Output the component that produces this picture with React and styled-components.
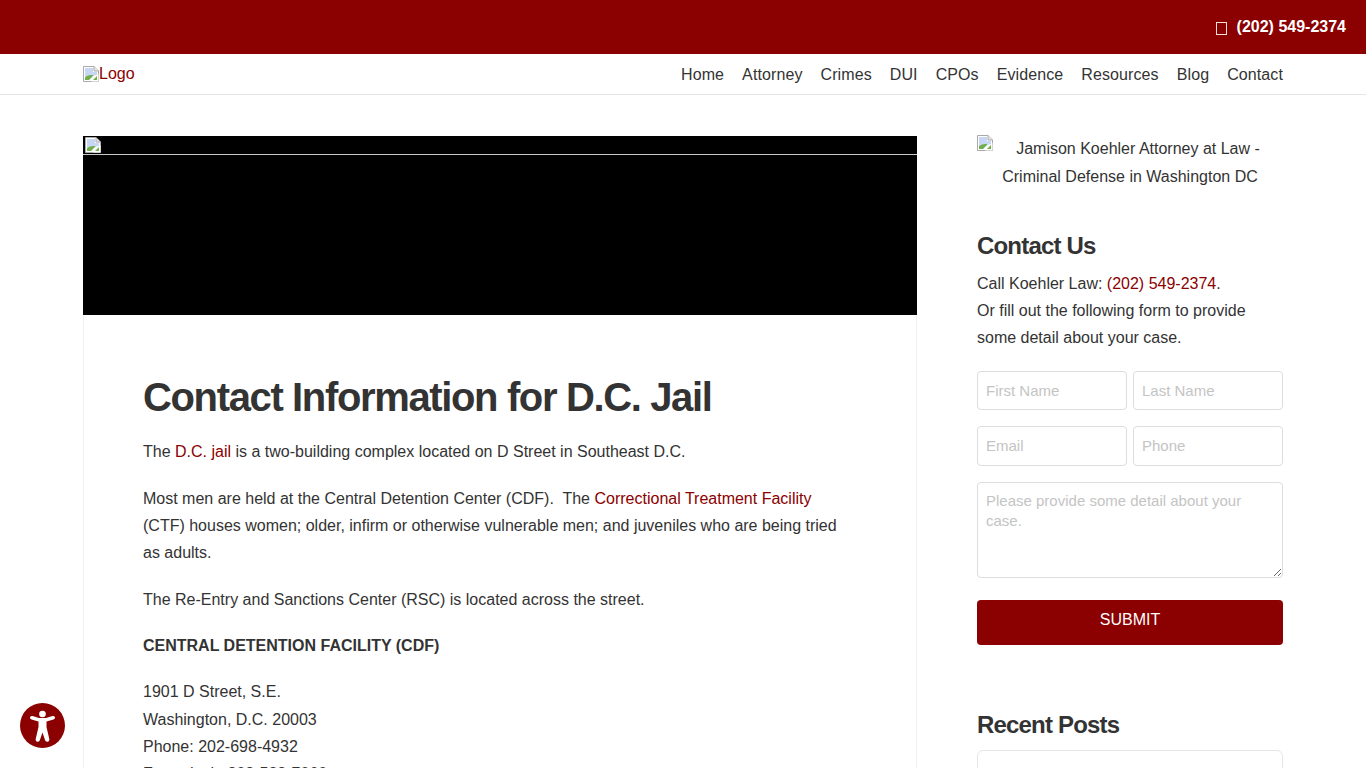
import React from 'react';
import styled, { createGlobalStyle } from 'styled-components';

const maroon = '#8b0000';

const GlobalStyle = createGlobalStyle`
  * { box-sizing: border-box; }
  html, body { margin: 0; padding: 0; background: #fff; }
  body {
    font-family: "Liberation Sans", Arial, sans-serif;
    font-size: 16px;
    line-height: 27.2px;
    color: #333;
  }
  a { color: ${maroon}; text-decoration: none; }
`;

const TopBar = styled.div`
  height: 54px;
  background: ${maroon};
  display: flex;
  justify-content: flex-end;
  align-items: center;
  padding: 0 20px 1px 0;
  color: #fff;
  font-weight: 700;
`;

const MissingGlyph = styled.span`
  width: 11px;
  height: 13px;
  border: 1px solid #f4dede;
  margin-right: 10px;
  margin-top: 3px;
`;

const NavBar = styled.header`
  height: 41px;
  border-bottom: 1px solid #e4e4e4;
  display: flex;
  justify-content: center;
`;

const NavInner = styled.div`
  width: 1200px;
  padding-top: 1px;
  display: flex;
  justify-content: space-between;
  align-items: center;
`;

const LogoLink = styled.a`
  display: flex;
  align-items: center;
  margin-top: -2px;
  svg { margin-top: 1px; }
`;

const NavLinks = styled.nav`
  display: flex;
  gap: 18px;
  letter-spacing: 0.1px;
`;

const NavLink = styled.a`
  color: #333;
`;

const Page = styled.div`
  width: 1200px;
  margin: 41px auto 0;
  display: grid;
  grid-template-columns: 834px 306px;
  column-gap: 60px;
  align-items: start;
`;

const Article = styled.main`
  border: 1px solid #f1f1f1;
  border-top: 0;
  border-radius: 0 0 6px 6px;
`;

const Hero = styled.div`
  height: 179px;
  margin: 0 -1px;
  background: #000;
  position: relative;
  padding: 1px 2px;
  svg { display: block; }
  &::after {
    content: "";
    position: absolute;
    left: 0;
    right: 0;
    top: 18px;
    height: 1px;
    background: #c8c8c8;
  }
`;

const Body = styled.div`
  padding: 60px 59px 40px;
`;

const Title = styled.h1`
  margin: 0 0 19.4px;
  font-size: 40px;
  line-height: 44px;
  font-weight: 700;
  letter-spacing: -0.034em;
  color: #333;
`;

const Para = styled.p`
  margin: 0 0 19.2px;
`;

const Sidebar = styled.aside`
  display: flex;
  flex-direction: column;
`;

const SideImage = styled.div`
  text-align: center;
  margin: -1px 0 40px;
  line-height: 28px;
  svg { float: left; }
`;

const SideHeading = styled.h3`
  margin: 0 0 9px;
  font-size: 24px;
  line-height: 30px;
  font-weight: 700;
  letter-spacing: -0.034em;
  color: #333;
`;

const SideText = styled.p`
  margin: 0 0 19px;
`;

const Form = styled.form`
  display: grid;
  grid-template-columns: 1fr 1fr;
  column-gap: 6px;
  row-gap: 16px;
`;

const Input = styled.input`
  width: 100%;
  height: 39.5px;
  padding: 0 8px;
  border: 1px solid #ddd;
  border-radius: 4px;
  font: 15px "Liberation Sans", Arial, sans-serif;
  color: #333;
  background: #fff;
  &::placeholder { color: #c4c4c4; opacity: 1; }
`;

const TextArea = styled.textarea`
  grid-column: 1 / -1;
  width: 100%;
  height: 96px;
  display: block;
  padding: 8px;
  border: 1px solid #ddd;
  border-radius: 4px;
  font: 15px/20px "Liberation Sans", Arial, sans-serif;
  background: #fff;
  &::placeholder { color: #c4c4c4; opacity: 1; }
`;

const Submit = styled.button`
  grid-column: 1 / -1;
  height: 45px;
  margin-top: 6px;
  padding: 0 0 4px;
  border: 0;
  border-radius: 4px;
  background: ${maroon};
  color: #fff;
  font: 16px "Liberation Sans", Arial, sans-serif;
  text-transform: uppercase;
`;

const RecentHeading = styled(SideHeading)`
  margin: 65px 0 10px;
`;

const RecentCard = styled.div`
  height: 200px;
  border: 1px solid #e6e6e6;
  border-radius: 6px;
`;

const A11yButton = styled.button`
  position: fixed;
  left: 20px;
  bottom: 20px;
  width: 45px;
  height: 45px;
  padding: 0;
  border: 0;
  border-radius: 50%;
  background: ${maroon};
  display: flex;
`;

// chrome's broken image marker
const BrokenImage = () => (
  <svg width="16" height="16" viewBox="0 0 16 16" style={{ flex: 'none' }}>
    <path d="M0.5 0.5H11L15.5 5V15.5H0.5Z" fill="#fff" stroke="#a9a9a9" />
    <path d="M11 0.5V5H15.5" fill="#e6e6e6" stroke="#a9a9a9" />
    <path d="M2 2H10V6H14V9L2 12Z" fill="#c7d6f2" />
    <path d="M2 14V11.5C5 9 8 8.5 10.5 9.5L6 14Z" fill="#6fae4a" />
    <path d="M15.5 8L8 15.5H15.5Z" fill="#fff" />
    <path d="M10 14L14 10V14Z" fill="#6fae4a" />
  </svg>
);

const AccessibilityIcon = () => (
  <svg width="45" height="45" viewBox="0 0 45 45" fill="#fff">
    <circle cx="22.5" cy="11" r="3.3" />
    <path d="M12.5 13C11.2 12.6 10 13.4 10 14.6C10 15.6 10.6 16.2 11.5 16.5L18.5 18.5V24L15.7 36C15.4 37.4 16.2 38.6 17.4 38.8C18.6 39 19.6 38.3 19.9 37.1L22.5 29.5L25 37.1C25.4 38.3 26.4 39 27.6 38.8C28.8 38.6 29.6 37.4 29.3 36L26.5 24V18.5L33.5 16.5C34.4 16.2 35 15.6 35 14.6C35 13.4 33.8 12.6 32.5 13L26 15H19Z" />
  </svg>
);

export default function App() {
  return (
    <>
      <GlobalStyle />
      <TopBar>
        <MissingGlyph />
        (202) 549-2374
      </TopBar>
      <NavBar>
        <NavInner>
          <LogoLink href="#"><BrokenImage />Logo</LogoLink>
          <NavLinks>
            {['Home', 'Attorney', 'Crimes', 'DUI', 'CPOs', 'Evidence', 'Resources', 'Blog', 'Contact'].map((item) => (
              <NavLink href="#" key={item}>{item}</NavLink>
            ))}
          </NavLinks>
        </NavInner>
      </NavBar>
      <Page>
        <Article>
          <Hero><BrokenImage /></Hero>
          <Body>
            <Title>Contact Information for D.C. Jail</Title>
            <Para>The <a href="#">D.C. jail</a> is a two-building complex located on D Street in Southeast D.C.</Para>
            <Para>
              Most men are held at the Central Detention Center (CDF).&nbsp; The <a href="#">Correctional Treatment Facility</a> (CTF) houses women; older, infirm or otherwise vulnerable men; and juveniles who are being tried as adults.
            </Para>
            <Para>The Re-Entry and Sanctions Center (RSC) is located across the street.</Para>
            <Para><strong>CENTRAL DETENTION FACILITY (CDF)</strong></Para>
            <Para>
              1901 D Street, S.E.<br />
              Washington, D.C. 20003<br />
              Phone: 202-698-4932<br />
              Front desk: 202-523-7060
            </Para>
          </Body>
        </Article>
        <Sidebar>
          <SideImage>
            <BrokenImage />Jamison Koehler Attorney at Law - Criminal Defense in Washington DC
          </SideImage>
          <SideHeading>Contact Us</SideHeading>
          <SideText>
            Call Koehler Law: <a href="#">(202) 549-2374</a>.<br />
            Or fill out the following form to provide some detail about your case.
          </SideText>
          <Form onSubmit={(e) => e.preventDefault()}>
            <Input placeholder="First Name" />
            <Input placeholder="Last Name" />
            <Input placeholder="Email" />
            <Input placeholder="Phone" />
            <TextArea placeholder="Please provide some detail about your case." />
            <Submit>Submit</Submit>
          </Form>
          <RecentHeading>Recent Posts</RecentHeading>
          <RecentCard />
        </Sidebar>
      </Page>
      <A11yButton aria-label="Accessibility"><AccessibilityIcon /></A11yButton>
    </>
  );
}
